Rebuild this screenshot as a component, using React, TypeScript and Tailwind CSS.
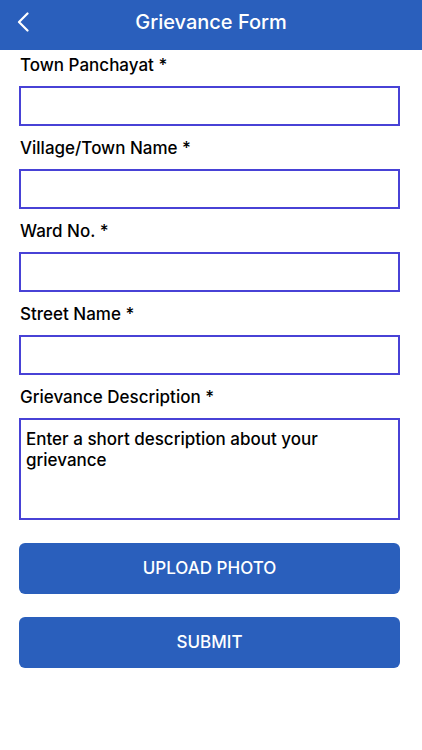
const fields = ["Town Panchayat *", "Village/Town Name *", "Ward No. *", "Street Name *"];

export default function App() {
  return (
    <div className="min-h-[750px] w-full bg-white" style={{ fontFamily: "Inter, 'Liberation Sans', sans-serif" }}>
      {/* header */}
      <div className="relative flex h-[50px] items-center justify-center bg-[#2a5fbc] pb-[6px]">
        <svg className="absolute left-[16px] top-[12px]" width="14" height="20" viewBox="0 0 14 20" fill="none">
          <path d="M11.5 1.5 3 10l8.5 8.5" stroke="white" strokeWidth="2.2" strokeLinecap="round" strokeLinejoin="round" />
        </svg>
        <h1 className="text-[20px] font-medium leading-[24px] text-white">Grievance Form</h1>
      </div>

      <div className="flex flex-col px-[19px] pt-[3px] pr-[22px]">
        {fields.map((f) => (
          <div key={f} className="mb-[10px] flex flex-col">
            <label className="mb-[9px] pl-[1px] text-[17px] font-medium leading-[24px] text-black">{f}</label>
            <input className="h-[40px] w-full border-2 border-[#4842d6] bg-white outline-none" />
          </div>
        ))}
        <div className="flex flex-col">
          <label className="mb-[9px] pl-[1px] text-[17px] font-medium leading-[24px] text-black">Grievance Description *</label>
          <div className="h-[102px] w-full border-2 border-[#4842d6] px-[5px] pt-[9px] text-[17px] font-medium leading-[21px] text-black">
            Enter a short description about your
            <br />
            grievance
          </div>
        </div>

        <button className="mt-[23px] h-[51px] w-full rounded-[6px] bg-[#2a5fbc] text-[17px] font-medium text-white">
          UPLOAD PHOTO
        </button>
        <button className="mt-[23px] h-[51px] w-full rounded-[6px] bg-[#2a5fbc] text-[17px] font-medium text-white">
          SUBMIT
        </button>
      </div>
    </div>
  );
}
